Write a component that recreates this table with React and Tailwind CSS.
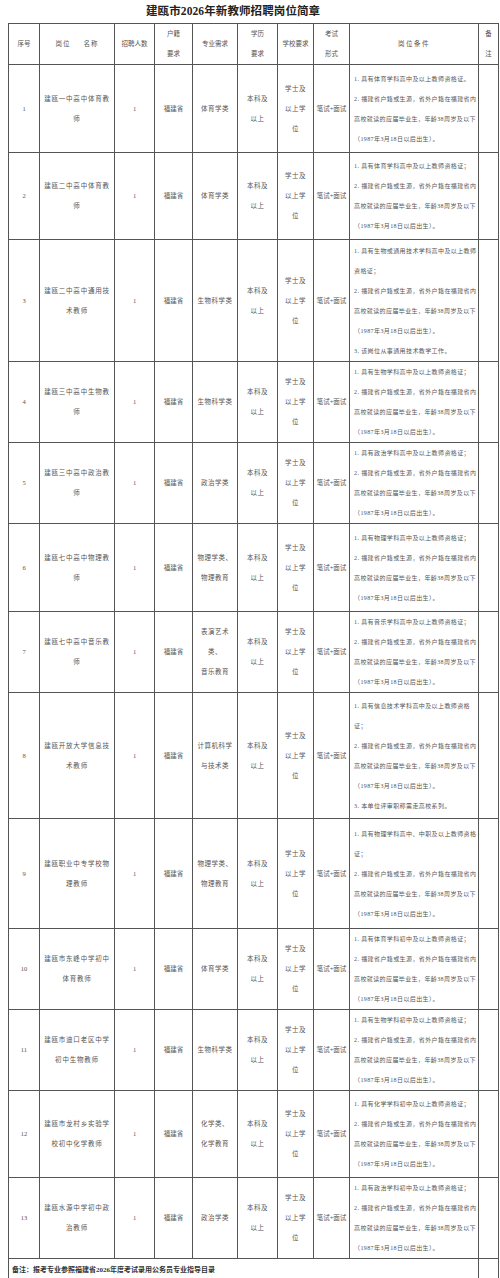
import React from "react";

const cond = (first) => [
  ...first,
  "2. 福建省户籍或生源，省外户籍在福建省内",
  "高校就读的应届毕业生，年龄38周岁及以下",
  "（1987年3月18日以后出生）。",
];

const rows = [
  { no: "1", name: ["建瓯一中高中体育教", "师"], major: ["体育学类"], h: "h-[88px]", c: cond(["1. 具有体育学科高中及以上教师资格证。"]) },
  { no: "2", name: ["建瓯二中高中体育教", "师"], major: ["体育学类"], h: "h-[87px]", c: cond(["1. 具有体育学科高中及以上教师资格证；"]) },
  { no: "3", name: ["建瓯二中高中通用技", "术教师"], major: ["生物科学类"], h: "h-[122px]", c: [...cond(["1. 具有生物或通用技术学科高中及以上教师", "资格证；"]), "3. 该岗位从事通用技术教学工作。"] },
  { no: "4", name: ["建瓯三中高中生物教", "师"], major: ["生物科学类"], h: "h-[81px]", c: cond(["1. 具有生物学科高中及以上教师资格证；"]) },
  { no: "5", name: ["建瓯三中高中政治教", "师"], major: ["政治学类"], h: "h-[81px]", c: cond(["1. 具有政治学科高中及以上教师资格证；"]) },
  { no: "6", name: ["建瓯七中高中物理教", "师"], major: ["物理学类、", "物理教育"], h: "h-[88px]", c: cond(["1. 具有物理学科高中及以上教师资格证；"]) },
  { no: "7", name: ["建瓯七中高中音乐教", "师"], major: ["表演艺术", "类、", "音乐教育"], h: "h-[79px]", c: cond(["1. 具有音乐学科高中及以上教师资格证；"]) },
  { no: "8", name: ["建瓯开放大学信息技", "术教师"], major: ["计算机科学", "与技术类"], h: "h-[126px]", c: [...cond(["1. 具有信息技术学科高中及以上教师资格", "证；"]), "3. 本单位评审职称需走高校系列。"] },
  { no: "9", name: ["建瓯职业中专学校物", "理教师"], major: ["物理学类、", "物理教育"], h: "h-[110px]", c: cond(["1. 具有物理学科高中、中职及以上教师资格", "证；"]) },
  { no: "10", name: ["建瓯市东峰中学初中", "体育教师"], major: ["体育学类"], h: "h-[81px]", c: cond(["1. 具有体育学科初中及以上教师资格证；"]) },
  { no: "11", name: ["建瓯市迪口老区中学", "初中生物教师"], major: ["生物科学类"], h: "h-[81px]", c: cond(["1. 具有生物学科初中及以上教师资格证；"]) },
  { no: "12", name: ["建瓯市龙村乡实验学", "校初中化学教师"], major: ["化学类、", "化学教育"], h: "h-[87px]", c: cond(["1. 具有化学学科初中及以上教师资格证；"]) },
  { no: "13", name: ["建瓯水源中学初中政", "治教师"], major: ["政治学类"], h: "h-[80px]", c: cond(["1. 具有政治学科初中及以上教师资格证；"]) },
];

const Lines = ({ items, className = "" }) => (
  <div className={className}>
    {items.map((t, i) => (
      <div key={i} className="whitespace-nowrap leading-[20px]">
        {t}
      </div>
    ))}
  </div>
);

const td = "border border-[#555] align-middle text-center p-0";

export default function App() {
  return (
    <div className="w-[500px] bg-white text-[#555]">
      <div className="font-['Liberation_Serif','Noto_Sans_CJK_SC',serif]">
        <div className="h-[23px] flex items-center pl-[146px] text-[11.5px] font-bold text-[#222] tracking-[0.1px]">
          建瓯市2026年新教师招聘岗位简章
        </div>
        <div className="pl-[8px]">
          <table className="border-collapse table-fixed w-[490px] text-[6.5px]">
            <colgroup>
              <col className="w-[31px]" />
              <col className="w-[75px]" />
              <col className="w-[40px]" />
              <col className="w-[38px]" />
              <col className="w-[45px]" />
              <col className="w-[40px]" />
              <col className="w-[36px]" />
              <col className="w-[36px]" />
              <col className="w-[129px]" />
              <col className="w-[20px]" />
            </colgroup>
            <tbody>
              <tr className="h-[40px]">
                <td className={td}>序号</td>
                <td className={td}><span className="tracking-[1px]">岗位</span>　　<span className="tracking-[1px]">名称</span></td>
                <td className={td}>招聘人数</td>
                <td className={td}><Lines items={["户籍", "要求"]} /></td>
                <td className={td}>专业需求</td>
                <td className={td}><Lines items={["学历", "要求"]} /></td>
                <td className={td}>学校要求</td>
                <td className={td}><Lines items={["考试", "形式"]} /></td>
                <td className={td}><span className="tracking-[1.5px]">岗位条件</span></td>
                <td className={td}><Lines items={["备", "注"]} /></td>
              </tr>
              {rows.map((r) => (
                <tr key={r.no} className={r.h}>
                  <td className={td}>{r.no}</td>
                  <td className={td}><Lines items={r.name} className="tracking-[0.8px]" /></td>
                  <td className={td}>1</td>
                  <td className={td}>福建省</td>
                  <td className={td}><Lines items={r.major} className="tracking-[0.5px]" /></td>
                  <td className={td}><Lines items={["本科及", "以上"]} className="tracking-[0.5px]" /></td>
                  <td className={td}><Lines items={["学士及", "以上学", "位"]} className="tracking-[0.5px]" /></td>
                  <td className={td}>笔试+面试</td>
                  <td className={`${td} !text-left pl-[4px]`}>
                    <Lines items={r.c} className="text-[6px] tracking-[0.4px]" />
                  </td>
                  <td className={td}></td>
                </tr>
              ))}
              <tr className="h-[24px]">
                <td colSpan={9} className="border border-[#555] align-middle text-left pl-[3px] text-[7px] font-bold text-[#333] whitespace-nowrap">
                  备注：报考专业参照福建省2026年度考试录用公务员专业指导目录
                </td>
                <td className={td}></td>
              </tr>
            </tbody>
          </table>
        </div>
      </div>
    </div>
  );
}
